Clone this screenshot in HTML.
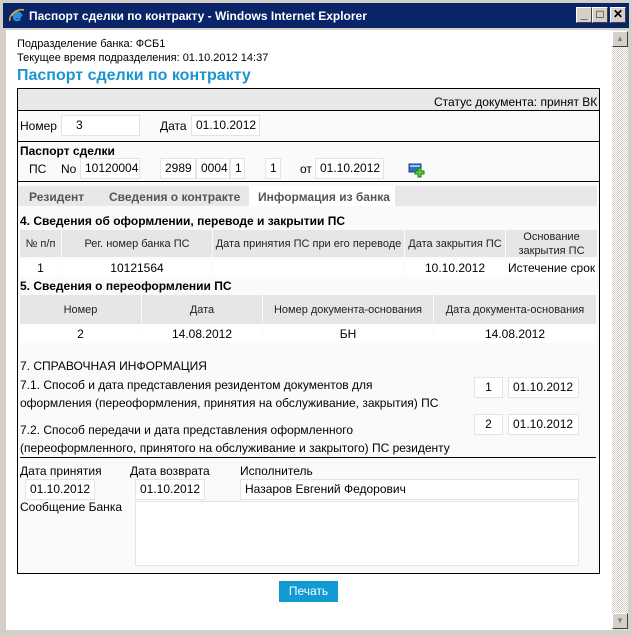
<!DOCTYPE html>
<html><head><meta charset="utf-8"><style>
*{box-sizing:border-box;margin:0;padding:0}
body{width:632px;height:636px;position:relative;background:#d4d0c8;font-family:"Liberation Sans",Arial,sans-serif;font-size:12px;color:#000;overflow:hidden}
.a{position:absolute;white-space:nowrap}
.tb{left:3px;top:3px;width:626px;height:25px;background:#0a246a}
.wb{background:#d4d0c8;border:1px solid;border-color:#fff #404040 #404040 #fff;width:16px;height:16px;top:7px;font-weight:bold;font-size:12px;text-align:center;line-height:13px}
.inp{position:absolute;background:#fff;border:1px solid #e4e4e4;height:21px;line-height:19px;padding-left:4px;font-size:12px}
.hl{position:absolute;height:1px;background:#000}
.th{position:absolute;background:#e6e6e6;text-align:center;font-size:11px;display:flex;align-items:center;justify-content:center;line-height:14px;color:#222}
.td{position:absolute;background:#fff;text-align:center;font-size:12px;line-height:18px}
b{font-weight:bold}
</style></head><body>
<div class="a tb"></div>
<svg class="a" style="left:8px;top:7px" width="18" height="18" viewBox="0 0 18 18"><path d="M13 10H6c0 3 3 4 6 2" stroke="#2f8fd8" stroke-width="2.4" fill="none"/><path d="M5 9c0-4 6-5 8-1H6" stroke="#2f8fd8" stroke-width="2.4" fill="none"/><path d="M2 14C0 8 10 1 16 3" stroke="#f0b020" stroke-width="1.5" fill="none"/></svg>
<div class="a" style="left:29px;top:9px;color:#fff;font-weight:bold;font-size:12px">Паспорт сделки по контракту - Windows Internet Explorer</div>
<div class="a wb" style="left:576px">_</div>
<div class="a wb" style="left:592px">□</div>
<div class="a wb" style="left:610px">✕</div>
<div class="a" style="left:6px;top:30px;width:606px;height:600px;background:#fff"></div>
<div class="a" style="left:612px;top:30px;width:16px;height:600px;background:repeating-conic-gradient(#fff 0 25%,#d4d0c8 0 50%) 0 0/2px 2px"></div>
<div class="a wb" style="left:612px;top:31px;font-size:8px;color:#808080">▲</div>
<div class="a wb" style="left:612px;top:613px;font-size:8px;color:#808080">▼</div>

<div class="a" style="left:17px;top:38px;font-size:11px">Подразделение банка: ФСБ1</div>
<div class="a" style="left:17px;top:52px;font-size:11px">Текущее время подразделения: 01.10.2012 14:37</div>
<div class="a" style="left:17px;top:67px;font-size:16px;font-weight:bold;color:#1c95cf">Паспорт сделки по контракту</div>

<div class="a" style="left:17px;top:88px;width:583px;height:486px;border:1px solid #000;background:#fafafa"></div>
<div class="a" style="left:18px;top:89px;width:581px;height:22px;background:#e8e8e8"></div>
<div class="a" style="left:434px;top:95px">Статус документа: принят ВК</div>
<div class="hl" style="left:18px;top:110px;width:581px"></div>
<div class="a" style="left:20px;top:119px">Номер</div>
<div class="inp" style="left:61px;top:115px;width:79px;padding-left:14px">3</div>
<div class="a" style="left:160px;top:119px">Дата</div>
<div class="inp" style="left:191px;top:115px;width:69px">01.10.2012</div>
<div class="hl" style="left:18px;top:141px;width:581px"></div>
<div class="a" style="left:20px;top:144px;font-weight:bold">Паспорт сделки</div>
<div class="a" style="left:29px;top:162px">ПС</div>
<div class="a" style="left:61px;top:162px">No</div>
<div class="inp" style="left:80px;top:158px;width:60px">10120004</div>
<div class="inp" style="left:160px;top:158px;width:36px">2989</div>
<div class="inp" style="left:196px;top:158px;width:34px">0004</div>
<div class="inp" style="left:230px;top:158px;width:15px">1</div>
<div class="inp" style="left:265px;top:158px;width:16px">1</div>
<div class="a" style="left:300px;top:162px">от</div>
<div class="inp" style="left:315px;top:158px;width:69px">01.10.2012</div>
<svg class="a" style="left:408px;top:163px" width="17" height="15"><rect x="1" y="1" width="12" height="8" fill="#3070c8" stroke="#1a3c90"/><rect x="2" y="2" width="10" height="2" fill="#9cc4f0"/><path d="M10 5h3v3h3v3h-3v3h-3v-3h-3v-3h3z" fill="#5cd038" stroke="#1a7a10"/></svg>
<div class="hl" style="left:18px;top:181px;width:581px"></div>
<div class="a" style="left:18px;top:186px;width:579px;height:20px;background:#e8e8e8"></div>
<div class="a" style="left:249px;top:186px;width:146px;height:20px;background:#fff"></div>
<div class="a" style="left:29px;top:190px;font-weight:bold;color:#555">Резидент</div>
<div class="a" style="left:109px;top:190px;font-weight:bold;color:#555">Сведения о контракте</div>
<div class="a" style="left:258px;top:190px;font-weight:bold;color:#555">Информация из банка</div>

<div class="a" style="left:20px;top:214px;font-weight:bold">4. Сведения об оформлении, переводе и закрытии ПС</div>
<div class="th" style="left:20px;top:230px;width:41px;height:27px">№ п/п</div>
<div class="th" style="left:62px;top:230px;width:150px;height:27px">Рег. номер банка ПС</div>
<div class="th" style="left:213px;top:230px;width:191px;height:27px">Дата принятия ПС при его переводе</div>
<div class="th" style="left:405px;top:230px;width:100px;height:27px">Дата закрытия ПС</div>
<div class="th" style="left:506px;top:230px;width:91px;height:27px">Основание<br>закрытия ПС</div>
<div class="td" style="left:20px;top:259px;width:41px">1</div>
<div class="td" style="left:62px;top:259px;width:150px">10121564</div>
<div class="td" style="left:213px;top:259px;width:191px">&nbsp;</div>
<div class="td" style="left:405px;top:259px;width:100px">10.10.2012</div>
<div class="td" style="left:506px;top:259px;width:91px;text-align:left;padding-left:2px;overflow:hidden">Истечение срок</div>
<div class="a" style="left:20px;top:279px;font-weight:bold">5. Сведения о переоформлении ПС</div>
<div class="th" style="left:20px;top:295px;width:121px;height:29px">Номер</div>
<div class="th" style="left:142px;top:295px;width:120px;height:29px">Дата</div>
<div class="th" style="left:263px;top:295px;width:170px;height:29px">Номер документа-основания</div>
<div class="th" style="left:434px;top:295px;width:162px;height:29px">Дата документа-основания</div>
<div class="td" style="left:20px;top:325px;width:121px">2</div>
<div class="td" style="left:142px;top:325px;width:120px">14.08.2012</div>
<div class="td" style="left:263px;top:325px;width:170px">БН</div>
<div class="td" style="left:434px;top:325px;width:162px">14.08.2012</div>

<div class="a" style="left:20px;top:359px">7. СПРАВОЧНАЯ ИНФОРМАЦИЯ</div>
<div class="a" style="left:20px;top:376px;line-height:18px">7.1. Способ и дата представления резидентом документов для<br>оформления (переоформления, принятия на обслуживание, закрытия) ПС</div>
<div class="inp" style="left:474px;top:377px;width:29px;text-align:center;padding:0">1</div>
<div class="inp" style="left:508px;top:377px;width:71px">01.10.2012</div>
<div class="a" style="left:20px;top:421px;line-height:18px">7.2. Способ передачи и дата представления оформленного<br>(переоформленного, принятого на обслуживание и закрытого) ПС резиденту</div>
<div class="inp" style="left:474px;top:414px;width:29px;text-align:center;padding:0">2</div>
<div class="inp" style="left:508px;top:414px;width:71px">01.10.2012</div>
<div class="hl" style="left:20px;top:457px;width:576px"></div>
<div class="a" style="left:20px;top:464px">Дата принятия</div>
<div class="a" style="left:130px;top:464px">Дата возврата</div>
<div class="a" style="left:240px;top:464px">Исполнитель</div>
<div class="inp" style="left:25px;top:479px;width:70px">01.10.2012</div>
<div class="inp" style="left:135px;top:479px;width:70px">01.10.2012</div>
<div class="inp" style="left:240px;top:479px;width:339px">Назаров Евгений Федорович</div>
<div class="a" style="left:20px;top:500px">Сообщение Банка</div>
<div class="inp" style="left:135px;top:501px;width:444px;height:65px"></div>
<div class="a" style="left:279px;top:581px;width:59px;height:21px;background:#129bd3;color:#fff;text-align:center;line-height:21px">Печать</div>
</body></html>
